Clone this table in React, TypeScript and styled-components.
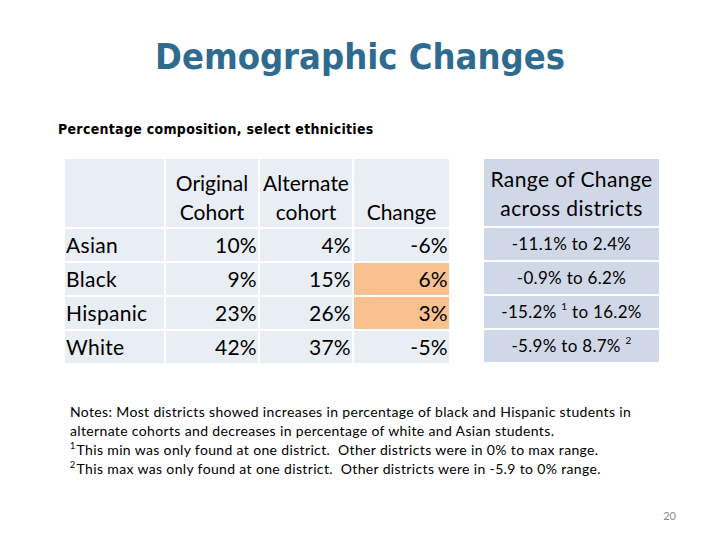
import styled, { createGlobalStyle } from 'styled-components';

const GlobalStyle = createGlobalStyle`
  html, body { margin: 0; padding: 0; background: #fff; }
  body { font-family: Lato, "Open Sans", sans-serif; color: #000; }
`;

const Slide = styled.div`
  width: 720px;
  height: 540px;
  position: relative;
  overflow: hidden;
  background: #fff;
`;

const Title = styled.h1`
  margin: 0;
  padding-top: 35px;
  height: 44px;
  text-align: center;
  font-family: "DejaVu Sans Condensed", "DejaVu Sans", sans-serif;
  font-weight: bold;
  font-size: 36px;
  line-height: 44px;
  color: #2f6b8f;
`;

const Subtitle = styled.div`
  margin: 41px 0 0 58px;
  font-family: "DejaVu Sans Condensed", "DejaVu Sans", sans-serif;
  font-weight: bold;
  font-size: 14px;
  letter-spacing: 0.3px;
  line-height: 18px;
  height: 18px;
`;

const Tables = styled.div`
  display: flex;
  align-items: flex-start;
  gap: 31px;
  margin: 19px 0 0 63px;
`;

const Table = styled.table`
  border-collapse: separate;
  border-spacing: 2px;
  font-size: 21px;
`;

const HeadCell = styled.th<{ $w: number }>`
  width: ${({ $w }) => $w}px;
  height: 67px;
  padding: 0;
  font-weight: normal;
  text-align: center;
  line-height: 29px;
`;

const LeftHead = styled(HeadCell)`
  background: #e9edf4;
  vertical-align: bottom;
  padding-bottom: 1px;
`;

const RightHead = styled(HeadCell)`
  background: #d0d8e8;
  vertical-align: middle;
  letter-spacing: 0.4px;
`;

const Cell = styled.td<{ $hot?: boolean; $align?: 'left' | 'right' }>`
  height: 32px;
  padding: 0 1px;
  background: ${({ $hot }) => ($hot ? '#f9c090' : '#e9edf4')};
  text-align: ${({ $align }) => $align ?? 'right'};
  vertical-align: middle;
  line-height: 24px;
  letter-spacing: 0.3px;
`;

const RangeCell = styled.td`
  height: 32px;
  padding: 0;
  background: #d0d8e8;
  text-align: center;
  font-size: 17px;
  letter-spacing: 0.3px;
  line-height: 20px;
  vertical-align: middle;
`;

const Sup = styled.sup`
  font-size: 10px;
  vertical-align: 8px;
  line-height: 0;
`;

const Notes = styled.div`
  margin: 37px 0 0 70px;
  width: 620px;
  font-size: 14px;
  letter-spacing: 0.35px;
  line-height: 19px;
  white-space: nowrap;
`;

const NoteSup = styled.sup`
  font-size: 9px;
  vertical-align: 6px;
  line-height: 0;
  margin-right: 1px;
`;

const PageNum = styled.div`
  position: absolute;
  right: 44px;
  bottom: 18px;
  font-size: 11px;
  color: #8a8a8a;
`;

type Row = {
  name: string;
  orig: string;
  alt: string;
  change: string;
  hot: boolean;
  from: string;
  fromNote?: string;
  to: string;
  toNote?: string;
};

const ROWS: Row[] = [
  { name: 'Asian', orig: '10%', alt: '4%', change: '-6%', hot: false, from: '-11.1%', to: '2.4%' },
  { name: 'Black', orig: '9%', alt: '15%', change: '6%', hot: true, from: '-0.9%', to: '6.2%' },
  { name: 'Hispanic', orig: '23%', alt: '26%', change: '3%', hot: true, from: '-15.2%', fromNote: '1', to: '16.2%' },
  { name: 'White', orig: '42%', alt: '37%', change: '-5%', hot: false, from: '-5.9%', to: '8.7%', toNote: '2' },
];

export default function App() {
  return (
    <Slide>
      <GlobalStyle />
      <Title>Demographic Changes</Title>
      <Subtitle>Percentage composition, select ethnicities</Subtitle>

      <Tables>
        <Table>
          <thead>
            <tr>
              <LeftHead $w={99} />
              <LeftHead $w={92}>Original<br />Cohort</LeftHead>
              <LeftHead $w={92}>Alternate<br />cohort</LeftHead>
              <LeftHead $w={95}>Change</LeftHead>
            </tr>
          </thead>
          <tbody>
            {ROWS.map((r) => (
              <tr key={r.name}>
                <Cell $align="left">{r.name}</Cell>
                <Cell>{r.orig}</Cell>
                <Cell>{r.alt}</Cell>
                <Cell $hot={r.hot}>{r.change}</Cell>
              </tr>
            ))}
          </tbody>
        </Table>

        <Table>
          <thead>
            <tr>
              <RightHead $w={175}>Range of Change<br />across districts</RightHead>
            </tr>
          </thead>
          <tbody>
            {ROWS.map((r) => (
              <tr key={r.name}>
                <RangeCell>
                  {r.from}
                  {r.fromNote && <> <Sup>{r.fromNote}</Sup></>} to {r.to}
                  {r.toNote && <> <Sup>{r.toNote}</Sup></>}
                </RangeCell>
              </tr>
            ))}
          </tbody>
        </Table>
      </Tables>

      <Notes>
        Notes: Most districts showed increases in percentage of black and Hispanic students in
        <br />
        alternate cohorts and decreases in percentage of white and Asian students.
        <br />
        <NoteSup>1</NoteSup>This min was only found at one district.&nbsp; Other districts were in 0% to max range.
        <br />
        <NoteSup>2</NoteSup>This max was only found at one district.&nbsp; Other districts were in -5.9 to 0% range.
      </Notes>

      <PageNum>20</PageNum>
    </Slide>
  );
}
